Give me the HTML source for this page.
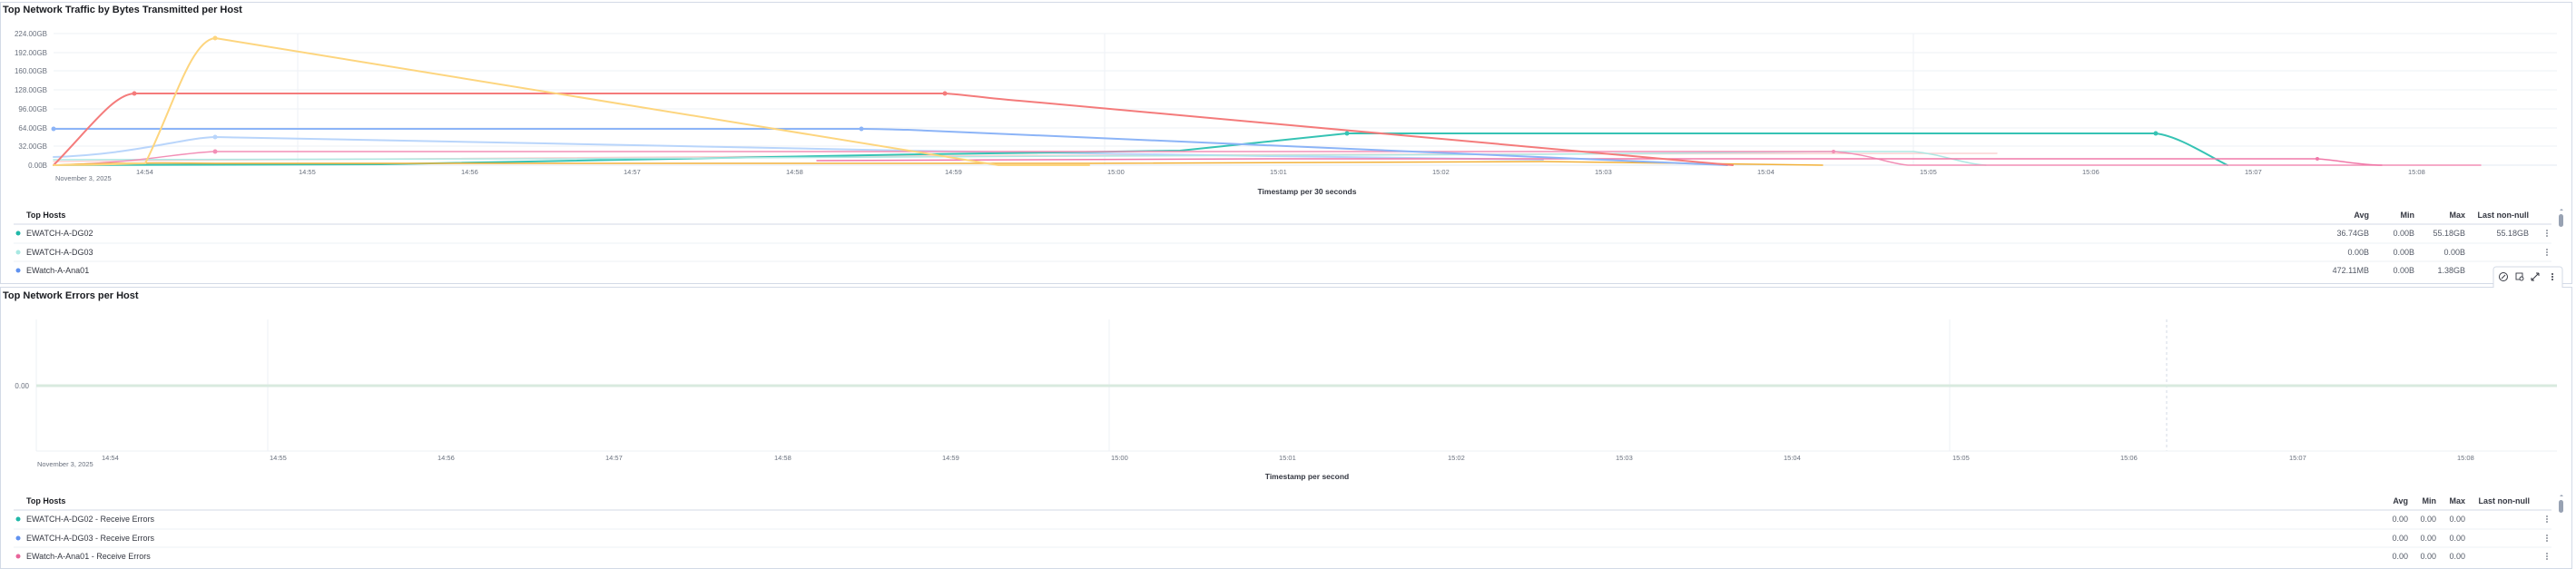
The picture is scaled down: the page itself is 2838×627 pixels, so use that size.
<!DOCTYPE html>
<html><head><meta charset="utf-8"><style>
body{margin:0;width:2838px;height:627px;overflow:hidden;background:#fff;font-family:"Liberation Sans",sans-serif;color:#1a1c21}
svg{position:absolute;left:0;top:0}
text{font-family:"Liberation Sans",sans-serif}
</style></head><body>
<svg width="2838" height="627" viewBox="0 0 2838 627">
<!-- panel borders -->
<rect x="0.5" y="2.5" width="2833" height="310" fill="none" stroke="#d3dae6"/>
<rect x="0.5" y="316.5" width="2833" height="310" fill="none" stroke="#d3dae6"/>
<text x="3" y="14" font-size="11" font-weight="bold" fill="#1a1c21">Top Network Traffic by Bytes Transmitted per Host</text>
<!-- top chart grid -->
<g stroke="#eef1f6" stroke-width="1">
<line x1="59" y1="37" x2="2817" y2="37"/><line x1="59" y1="58" x2="2817" y2="58"/><line x1="59" y1="78" x2="2817" y2="78"/><line x1="59" y1="99" x2="2817" y2="99"/><line x1="59" y1="120" x2="2817" y2="120"/><line x1="59" y1="141" x2="2817" y2="141"/><line x1="59" y1="161" x2="2817" y2="161"/>
<line x1="328" y1="37" x2="328" y2="182"/><line x1="1217" y1="37" x2="1217" y2="182"/><line x1="2108" y1="37" x2="2108" y2="182"/>
</g>
<line x1="59" y1="182" x2="2817" y2="182" stroke="#e3e8f0"/>
<g font-size="8" fill="#69707d" text-anchor="end">
<text x="52" y="40">224.00GB</text><text x="52" y="61">192.00GB</text><text x="52" y="81">160.00GB</text><text x="52" y="102">128.00GB</text><text x="52" y="123">96.00GB</text><text x="52" y="144">64.00GB</text><text x="52" y="164">32.00GB</text><text x="52" y="185">0.00B</text>
</g>
<g font-size="7.5" fill="#69707d">
<text x="150" y="192">14:54</text><text x="329" y="192">14:55</text><text x="508" y="192">14:56</text><text x="687" y="192">14:57</text><text x="866" y="192">14:58</text><text x="1041" y="192">14:59</text><text x="1220" y="192">15:00</text><text x="1399" y="192">15:01</text><text x="1578" y="192">15:02</text><text x="1757" y="192">15:03</text><text x="1936" y="192">15:04</text><text x="2115" y="192">15:05</text><text x="2294" y="192">15:06</text><text x="2473" y="192">15:07</text><text x="2653" y="192">15:08</text>
<text x="61" y="199">November 3, 2025</text>
</g>
<text x="1440" y="214" font-size="8.5" font-weight="bold" text-anchor="middle" fill="#343741">Timestamp per 30 seconds</text>
<!-- series -->
<g fill="none" stroke-width="2" stroke-linecap="round" stroke-linejoin="round">
<path d="M59 178 L300 176 L900 172 L1500 170 L2200 169" stroke="#fbd3d3" stroke-width="1.5"/>
<path d="M59 173 C150 170 200 152 237 151 L600 158 L1000 166 L1400 172 L1700 176" stroke="#b9d5fb"/>
<path d="M59 182 L420 181 C600 176 1000 170 1300 166 L1484 147 L2375 147 C2400 150 2430 170 2454 182" stroke="#36c3b4"/>
<path d="M59 176 L600 175 L1200 172 L1700 170 L2020 167 L2108 167 C2140 170 2160 180 2188 182" stroke="#aee8e3" stroke-width="1.5"/>
<path d="M59 182 C150 180 200 168 237 167 L2020 167 C2060 170 2080 180 2102 182 L2733 182" stroke="#f28fb6" stroke-width="1.5"/>
<path d="M900 177 L1400 175 L2553 175 C2580 177 2600 182 2624 182" stroke="#f078a8" stroke-width="1.5"/>
<path d="M59 182 C100 180 150 179 237 180 L1200 180 L1700 178 L2008 182" stroke="#f2b13a" stroke-width="1.5"/>
<path d="M59 142 L949 142 C970 142 990 143 1000 143 L1903 182" stroke="#8cb4f7"/>
<path d="M59 182 C100 140 125 104 148 103 L1041 103 C1070 105 1095 109 1123 111 L1909 182" stroke="#f47b7b"/>
<path d="M59 182 C120 182 140 180 160 180 C190 120 210 44 237 42 L1100 182 L1200 182" stroke="#fdd57e"/>
</g>
<g>
<circle cx="148" cy="103" r="2.5" fill="#f47b7b"/><circle cx="1041" cy="103" r="2.5" fill="#f47b7b"/>
<circle cx="237" cy="42" r="2.5" fill="#fdd57e"/><circle cx="59" cy="142" r="2.5" fill="#8cb4f7"/><circle cx="949" cy="142" r="2.5" fill="#8cb4f7"/>
<circle cx="237" cy="151" r="2.5" fill="#b9d5fb"/><circle cx="237" cy="167" r="2.5" fill="#f28fb6"/>
<circle cx="1484" cy="147" r="2.5" fill="#36c3b4"/><circle cx="2375" cy="147" r="2.5" fill="#36c3b4"/>
<circle cx="2553" cy="175" r="2" fill="#f078a8"/><circle cx="2020" cy="167" r="2" fill="#f28fb6"/>
</g>
<!-- top table -->
<text x="29" y="240" font-size="9" font-weight="bold" fill="#1a1c21">Top Hosts</text>
<line x1="15" y1="247" x2="2811" y2="247" stroke="#d3dae6"/>
<line x1="15" y1="268" x2="2811" y2="268" stroke="#eef1f6"/>
<line x1="15" y1="288" x2="2811" y2="288" stroke="#eef1f6"/>
<g font-size="9" fill="#343741" font-weight="bold" text-anchor="end">
<text x="2610" y="240">Avg</text><text x="2660" y="240">Min</text><text x="2716" y="240">Max</text><text x="2786" y="240">Last non-null</text>
</g>
<g font-size="9" fill="#343741">
<circle cx="20" cy="257" r="2.5" fill="#20b8a8"/><text x="29" y="260">EWATCH-A-DG02</text>
<circle cx="20" cy="278" r="2.5" fill="#a8e8e2"/><text x="29" y="281">EWATCH-A-DG03</text>
<circle cx="20" cy="298" r="2.5" fill="#6092f0"/><text x="29" y="301">EWatch-A-Ana01</text>
</g>
<g font-size="9" fill="#535966" text-anchor="end">
<text x="2610" y="260">36.74GB</text><text x="2660" y="260">0.00B</text><text x="2716" y="260">55.18GB</text><text x="2786" y="260">55.18GB</text>
<text x="2610" y="281">0.00B</text><text x="2660" y="281">0.00B</text><text x="2716" y="281">0.00B</text>
<text x="2610" y="301">472.11MB</text><text x="2660" y="301">0.00B</text><text x="2716" y="301">1.38GB</text>
</g>
<g fill="#69707d"><circle cx="2806" cy="254" r="0.9"/><circle cx="2806" cy="257" r="0.9"/><circle cx="2806" cy="260" r="0.9"/>
<circle cx="2806" cy="275" r="0.9"/><circle cx="2806" cy="278" r="0.9"/><circle cx="2806" cy="281" r="0.9"/></g>
<path d="M2820 232 l2 -2 l2 2z" fill="#98a2b3"/>
<rect x="2819" y="236" width="5" height="14" rx="2.5" fill="#98a2b3"/>
<!-- toolbar -->
<path d="M2747 317 V297 a3 3 0 0 1 3 -3 H2820 a3 3 0 0 1 3 3 V317" fill="#fff" stroke="#d3dae6"/>
<circle cx="2758" cy="305" r="4.5" fill="none" stroke="#343741" stroke-width="1"/><path d="M2756 307 L2760 303" stroke="#343741"/>
<rect x="2772" y="301" width="7" height="7" fill="none" stroke="#343741" stroke-width="0.9"/><circle cx="2778" cy="307" r="2" fill="#fff" stroke="#343741" stroke-width="0.9"/>
<path d="M2789 309 L2797 301 M2789 309 h3 M2789 309 v-3 M2797 301 h-3 M2797 301 v3" stroke="#343741" stroke-width="1" fill="none"/>
<g fill="#343741"><circle cx="2812" cy="302" r="1"/><circle cx="2812" cy="305" r="1"/><circle cx="2812" cy="308" r="1"/></g>
<!-- bottom panel -->
<text x="3" y="329" font-size="11" font-weight="bold" fill="#1a1c21">Top Network Errors per Host</text>
<g stroke="#eef1f6"><line x1="40" y1="352" x2="40" y2="497"/><line x1="295" y1="352" x2="295" y2="497"/><line x1="1222" y1="352" x2="1222" y2="497"/><line x1="2148" y1="352" x2="2148" y2="497"/></g>
<line x1="2387" y1="352" x2="2387" y2="497" stroke="#d3dae6" stroke-dasharray="3 3"/>
<line x1="40" y1="497" x2="2817" y2="497" stroke="#eef1f6"/>
<line x1="40" y1="425" x2="2817" y2="425" stroke="#d8eadf" stroke-width="3"/>
<text x="32" y="428" font-size="8" fill="#69707d" text-anchor="end">0.00</text>
<g font-size="7.5" fill="#69707d">
<text x="112" y="507">14:54</text><text x="297" y="507">14:55</text><text x="482" y="507">14:56</text><text x="667" y="507">14:57</text><text x="853" y="507">14:58</text><text x="1038" y="507">14:59</text><text x="1224" y="507">15:00</text><text x="1409" y="507">15:01</text><text x="1595" y="507">15:02</text><text x="1780" y="507">15:03</text><text x="1965" y="507">15:04</text><text x="2151" y="507">15:05</text><text x="2336" y="507">15:06</text><text x="2522" y="507">15:07</text><text x="2707" y="507">15:08</text>
<text x="41" y="514">November 3, 2025</text>
</g>
<text x="1440" y="528" font-size="8.5" font-weight="bold" text-anchor="middle" fill="#343741">Timestamp per second</text>
<text x="29" y="555" font-size="9" font-weight="bold" fill="#1a1c21">Top Hosts</text>
<line x1="15" y1="562" x2="2811" y2="562" stroke="#d3dae6"/>
<line x1="15" y1="583" x2="2811" y2="583" stroke="#eef1f6"/>
<line x1="15" y1="603" x2="2811" y2="603" stroke="#eef1f6"/>
<g font-size="9" fill="#343741" font-weight="bold" text-anchor="end">
<text x="2653" y="555">Avg</text><text x="2684" y="555">Min</text><text x="2716" y="555">Max</text><text x="2787" y="555">Last non-null</text>
</g>
<g font-size="9" fill="#343741">
<circle cx="20" cy="572" r="2.5" fill="#20b8a8"/><text x="29" y="575">EWATCH-A-DG02 - Receive Errors</text>
<circle cx="20" cy="593" r="2.5" fill="#6092f0"/><text x="29" y="596">EWATCH-A-DG03 - Receive Errors</text>
<circle cx="20" cy="613" r="2.5" fill="#e8649a"/><text x="29" y="616">EWatch-A-Ana01 - Receive Errors</text>
</g>
<g font-size="9" fill="#535966" text-anchor="end">
<text x="2653" y="575">0.00</text><text x="2684" y="575">0.00</text><text x="2716" y="575">0.00</text>
<text x="2653" y="596">0.00</text><text x="2684" y="596">0.00</text><text x="2716" y="596">0.00</text>
<text x="2653" y="616">0.00</text><text x="2684" y="616">0.00</text><text x="2716" y="616">0.00</text>
</g>
<g fill="#69707d"><circle cx="2806" cy="569" r="0.9"/><circle cx="2806" cy="572" r="0.9"/><circle cx="2806" cy="575" r="0.9"/>
<circle cx="2806" cy="590" r="0.9"/><circle cx="2806" cy="593" r="0.9"/><circle cx="2806" cy="596" r="0.9"/>
<circle cx="2806" cy="610" r="0.9"/><circle cx="2806" cy="613" r="0.9"/><circle cx="2806" cy="616" r="0.9"/></g>
<path d="M2820 547 l2 -2 l2 2z" fill="#98a2b3"/>
<rect x="2819" y="551" width="5" height="14" rx="2.5" fill="#98a2b3"/>
</svg>
</body></html>
